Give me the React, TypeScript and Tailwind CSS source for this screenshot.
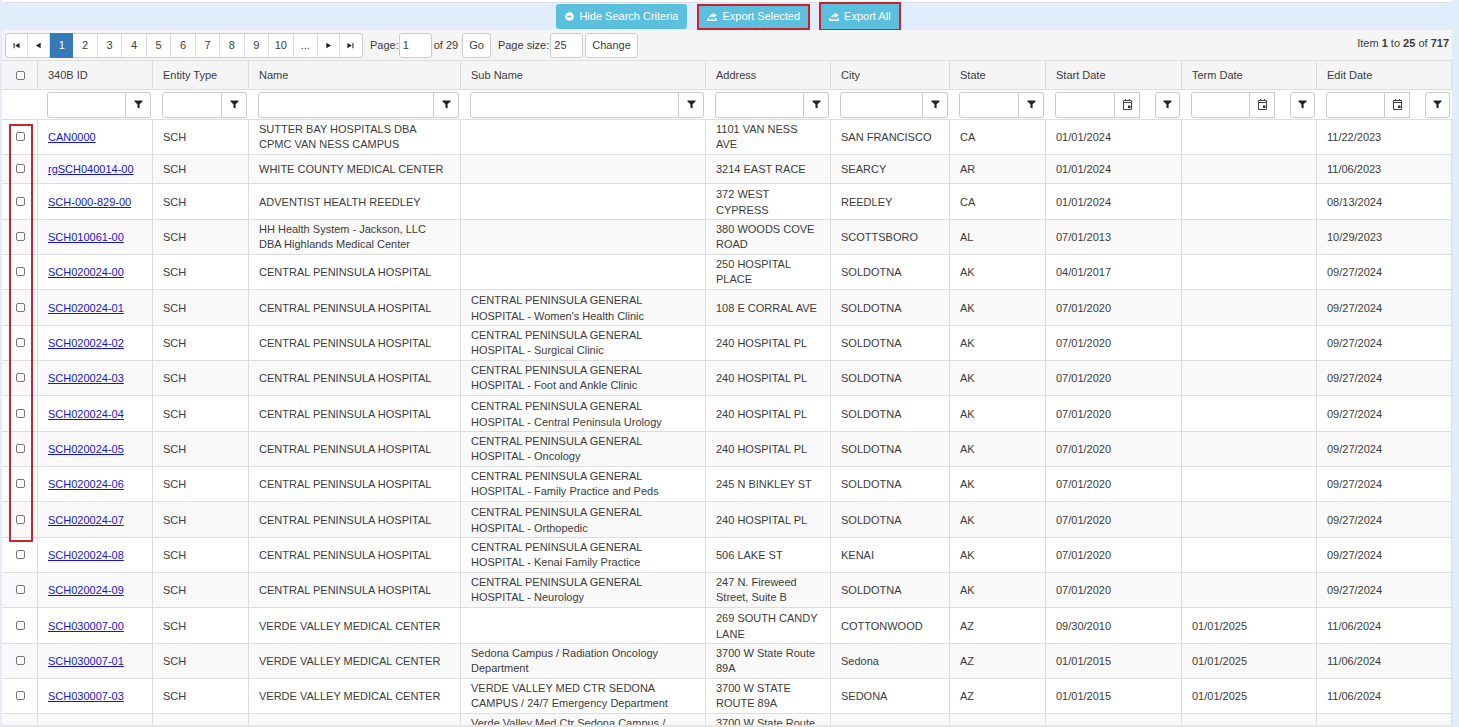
import React from 'react';

type Row = {
  id: string;
  name: string;
  sub?: string;
  address: string;
  city: string;
  state: string;
  start: string;
  term?: string;
  edit: string;
};

const CPH = 'CENTRAL PENINSULA HOSPITAL';
const CPG = 'CENTRAL PENINSULA GENERAL HOSPITAL - ';
const VVM = 'VERDE VALLEY MEDICAL CENTER';

const soldotna = (n: string, clinic: string, address = '240 HOSPITAL PL', city = 'SOLDOTNA'): Row => ({
  id: `SCH020024-${n}`,
  name: CPH,
  sub: CPG + clinic,
  address,
  city,
  state: 'AK',
  start: '07/01/2020',
  edit: '09/27/2024',
});

const rows: Row[] = [
  { id: 'CAN0000', name: 'SUTTER BAY HOSPITALS DBA CPMC VAN NESS CAMPUS', address: '1101 VAN NESS AVE', city: 'SAN FRANCISCO', state: 'CA', start: '01/01/2024', edit: '11/22/2023' },
  { id: 'rgSCH040014-00', name: 'WHITE COUNTY MEDICAL CENTER', address: '3214 EAST RACE', city: 'SEARCY', state: 'AR', start: '01/01/2024', edit: '11/06/2023' },
  { id: 'SCH-000-829-00', name: 'ADVENTIST HEALTH REEDLEY', address: '372 WEST CYPRESS', city: 'REEDLEY', state: 'CA', start: '01/01/2024', edit: '08/13/2024' },
  { id: 'SCH010061-00', name: 'HH Health System - Jackson, LLC DBA Highlands Medical Center', address: '380 WOODS COVE ROAD', city: 'SCOTTSBORO', state: 'AL', start: '07/01/2013', edit: '10/29/2023' },
  { id: 'SCH020024-00', name: CPH, address: '250 HOSPITAL PLACE', city: 'SOLDOTNA', state: 'AK', start: '04/01/2017', edit: '09/27/2024' },
  soldotna('01', "Women's Health Clinic", '108 E CORRAL AVE'),
  soldotna('02', 'Surgical Clinic'),
  soldotna('03', 'Foot and Ankle Clinic'),
  soldotna('04', 'Central Peninsula Urology'),
  soldotna('05', 'Oncology'),
  soldotna('06', 'Family Practice and Peds', '245 N BINKLEY ST'),
  soldotna('07', 'Orthopedic'),
  soldotna('08', 'Kenai Family Practice', '506 LAKE ST', 'KENAI'),
  soldotna('09', 'Neurology', '247 N. Fireweed Street, Suite B'),
  { id: 'SCH030007-00', name: VVM, address: '269 SOUTH CANDY LANE', city: 'COTTONWOOD', state: 'AZ', start: '09/30/2010', term: '01/01/2025', edit: '11/06/2024' },
  { id: 'SCH030007-01', name: VVM, sub: 'Sedona Campus / Radiation Oncology Department', address: '3700 W State Route 89A', city: 'Sedona', state: 'AZ', start: '01/01/2015', term: '01/01/2025', edit: '11/06/2024' },
  { id: 'SCH030007-03', name: VVM, sub: 'VERDE VALLEY MED CTR SEDONA CAMPUS / 24/7 Emergency Department', address: '3700 W STATE ROUTE 89A', city: 'SEDONA', state: 'AZ', start: '01/01/2015', term: '01/01/2025', edit: '11/06/2024' },
];

const columns = [
  { label: '340B ID', width: 'w-[115px]' },
  { label: 'Entity Type', width: 'w-[96px]' },
  { label: 'Name', width: 'w-[212px]' },
  { label: 'Sub Name', width: 'w-[245px]' },
  { label: 'Address', width: 'w-[125px]' },
  { label: 'City', width: 'w-[119px]' },
  { label: 'State', width: 'w-[96px]' },
  { label: 'Start Date', width: 'w-[136px]', date: true },
  { label: 'Term Date', width: 'w-[135px]', date: true },
  { label: 'Edit Date', width: 'w-[135px]', date: true },
];

const FunnelIcon = () => (
  <svg viewBox="0 0 10 10" className="size-[9px]" fill="#222" aria-hidden="true">
    <path d="M0.5 0.5h9v1.2L6.2 4.8v4.6L3.8 8.2V4.8L0.5 1.7z" />
  </svg>
);

const CalendarIcon = () => (
  <svg viewBox="0 0 11 11" className="size-[11px]" fill="none" stroke="#444" aria-hidden="true">
    <path d="M1.5 1.5h8v9h-8zM1 3.5h9M3.5 0v2M7.5 0v2" />
    <path d="M6 6.5h2.5v2.5H6z" fill="#333" stroke="none" />
  </svg>
);

const ExportIcon = () => (
  <svg viewBox="0 0 12 12" className="size-[10px]" fill="#fff" aria-hidden="true">
    <path d="M7 0.8L11.8 4 7 7.2V5.4C5.2 5.3 4 5.9 2.6 7.6 2.8 4.6 4.2 2.8 7 2.6z" />
    <path d="M0.2 7.6h1.8v1.3h7.8V7.4h1.8v3.4H0.2z" />
  </svg>
);

const MinusCircleIcon = () => (
  <svg viewBox="0 0 10 10" className="size-[9px]" aria-hidden="true">
    <circle cx="5" cy="5" r="4.8" fill="#fff" />
    <path d="M2.6 4.1h4.8v1.8H2.6z" fill="#5bc0de" />
  </svg>
);

const Arrow = ({ back, edge }: { back?: boolean; edge?: boolean }) => (
  <svg viewBox="0 0 8 8" className={back ? 'size-[7px] rotate-180' : 'size-[7px]'} fill="#222" aria-hidden="true">
    <path d={edge ? 'M0.5 1l5 3-5 3zM6.2 1h1.2v6H6.2z' : 'M1.5 0.8l5.5 3.2-5.5 3.2z'} />
  </svg>
);

const Check = ({ label }: { label: string }) => (
  <input
    type="checkbox"
    aria-label={label}
    className="mx-auto block size-[9px] appearance-none rounded-[2px] border border-[#767676] bg-white checked:bg-[#337ab7]"
  />
);

const pageCell = 'flex items-center justify-center border-r border-[#ddd] last:border-r-0';
const box = 'border border-[#ccc] bg-white';
const topButton = 'flex items-center gap-[5px] bg-[#5bc0de] text-white';

export default function App() {
  return (
    <div className="flex h-screen min-w-[1200px] flex-col overflow-hidden bg-[#e1edfb] pl-0.5 pr-[7px] font-['Liberation_Sans',Arial,sans-serif] text-[11px] leading-[15px] text-[#3c3c3c]">
      <div className="h-[3px] shrink-0 rounded-b-[3px] border-b border-[#dbe3ec] bg-white" />
      <div className="flex h-[27px] shrink-0 items-center justify-center pl-[3px]">
        <button className={`${topButton} mr-[10px] h-[25px] rounded-[3px] px-[9px]`}>
          <MinusCircleIcon />
          Hide Search Criteria
        </button>
        <button className={`${topButton} mr-[9px] h-[26px] border-2 border-[#d01f2b] px-2`}>
          <ExportIcon />
          Export Selected
        </button>
        <button className={`${topButton} -my-1 h-[29px] border-2 border-[#d01f2b] px-2`}>
          <ExportIcon />
          Export All
        </button>
      </div>

      <div className="flex h-[31px] shrink-0 items-center justify-between border-b border-[#ddd] bg-[#f5f5f5] pl-[3px] pr-[3px]">
        <div className="flex items-center">
          <nav aria-label="Pages" className={`${box} flex h-[25px] w-[358px] rounded-[3px]`}>
            <button aria-label="First page" className={`${pageCell} w-[22px]`}><Arrow back edge /></button>
            <button aria-label="Previous page" className={`${pageCell} w-[22px]`}><Arrow back /></button>
            {['1', '2', '3', '4', '5', '6', '7', '8', '9', '10', '...'].map((p) => (
              <button
                key={p}
                className={p === '1' ? '-my-px flex flex-1 items-center justify-center bg-[#337ab7] text-white' : `${pageCell} flex-1`}
              >
                {p}
              </button>
            ))}
            <button aria-label="Next page" className={`${pageCell} w-[22px]`}><Arrow /></button>
            <button aria-label="Last page" className={`${pageCell} w-[22px]`}><Arrow edge /></button>
          </nav>
          <label htmlFor="page" className="ml-[7px]">Page:</label>
          <input id="page" defaultValue="1" className={`${box} mr-0.5 h-[25px] w-[33px] rounded-[3px] px-[3px]`} />
          <span>of 29</span>
          <button className={`${box} ml-1 h-[25px] rounded-[3px] px-1.5`}>Go</button>
          <label htmlFor="size" className="ml-[7px]">Page size:</label>
          <input id="size" defaultValue="25" className={`${box} ml-px mr-0.5 h-[25px] w-[33px] rounded-[3px] px-[3px]`} />
          <button className={`${box} h-[25px] rounded-[3px] px-1.5`}>Change</button>
        </div>
        <p className="pb-[3px]">
          Item <b>1</b> to <b>25</b> of <b>717</b>
        </p>
      </div>

      <div className="relative min-h-0 flex-1 overflow-hidden bg-white">
        <table className="w-full table-fixed border-separate border-spacing-0">
          <colgroup>
            <col className="w-[36px]" />
            {columns.map((c) => (
              <col key={c.label} className={c.width} />
            ))}
          </colgroup>
          <thead>
            <tr className="h-[29px] bg-[#f5f5f5]">
              <th className="border-b border-r border-[#ddd] p-0 pl-px"><Check label="Select all" /></th>
              {columns.map((c) => (
                <th key={c.label} className="border-b border-r border-[#ddd] p-0 pl-[10px] text-left font-normal">
                  {c.label}
                </th>
              ))}
            </tr>
            <tr className="h-[30px]">
              <td className="border-b border-[#ddd] p-0" />
              {columns.map((c) => (
                <td key={c.label} className="border-b border-[#ddd] p-0 pl-[9px] pr-0.5">
                  <div className="flex h-[26px]">
                    <input aria-label={`Filter ${c.label}`} className={`${box} min-w-0 flex-1 rounded-l-[3px] px-1`} />
                    {c.date && (
                      <button aria-label={`Pick ${c.label}`} className={`${box} mr-[15px] flex w-[25px] shrink-0 items-center justify-center border-l-0`}>
                        <CalendarIcon />
                      </button>
                    )}
                    <button
                      aria-label={`Filter options for ${c.label}`}
                      className={`${box} flex w-[25px] shrink-0 items-center justify-center ${c.date ? 'rounded-[3px]' : 'rounded-r-[3px] border-l-0'}`}
                    >
                      <FunnelIcon />
                    </button>
                  </div>
                </td>
              ))}
            </tr>
          </thead>
          <tbody className="[&_td]:border-b [&_td]:border-r [&_td]:border-[#ddd] [&_td]:px-[10px] [&_td]:py-0">
            {rows.map((r, i) => (
              <tr
                key={r.id}
                className={`even:bg-[#f9f9f9] ${i === 1 ? 'h-[29px]' : 'h-[35px] nth-[3n]:h-9 nth-[3n]:leading-4'}`}
              >
                <td className="pr-0! pb-px! pl-px!"><Check label={`Select ${r.id}`} /></td>
                <td className="pr-0!"><a href={`#${r.id}`} className="text-[#1414e0] underline">{r.id}</a></td>
                <td>SCH</td>
                <td>{r.name}</td>
                <td>{r.sub}</td>
                <td>{r.address}</td>
                <td className="pr-0!">{r.city}</td>
                <td>{r.state}</td>
                <td>{r.start}</td>
                <td>{r.term}</td>
                <td>{r.edit}</td>
              </tr>
            ))}
            <tr className="h-[35px] bg-[#f9f9f9]">
              <td /><td /><td /><td />
              <td className="pt-0.5! align-top">Verde Valley Med Ctr Sedona Campus /</td>
              <td className="pt-0.5! align-top">3700 W State Route</td>
              <td /><td /><td /><td /><td />
            </tr>
          </tbody>
        </table>
        <div className="pointer-events-none absolute left-[7px] top-[63px] h-[418px] w-[24px] border-2 border-[#c9252f]" />
      </div>
      <div className="h-0.5 shrink-0 bg-[#e6e6e6]" />
    </div>
  );
}
